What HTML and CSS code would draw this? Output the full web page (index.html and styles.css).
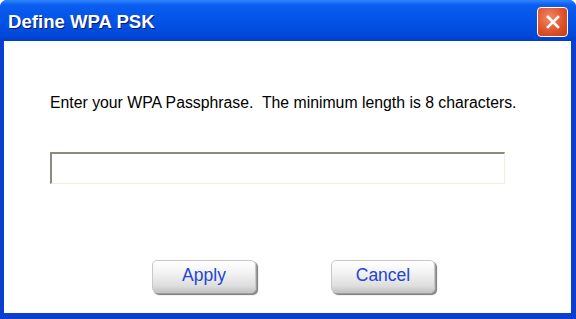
FILE: index.html
```html
<!DOCTYPE html>
<html lang="en">
<head>
  <meta charset="UTF-8">
  <title>Define WPA PSK</title>
  <link rel="stylesheet" href="styles.css">
</head>
<body>
  <div class="window">
    <div class="titlebar">
      <span class="title">Define WPA PSK</span>
      <button class="close" aria-label="Close">
        <svg width="16" height="16" viewBox="0 0 16 16">
          <path d="M3 3 L13 13 M13 3 L3 13" stroke="#fff" stroke-width="2.6" stroke-linecap="square"/>
        </svg>
      </button>
    </div>
    <div class="content">
      <p class="prompt">Enter your WPA Passphrase.&nbsp; The minimum length is 8 characters.</p>
      <input type="text" class="passphrase">
      <div class="actions">
        <button class="btn">Apply</button>
        <button class="btn">Cancel</button>
      </div>
    </div>
  </div>
</body>
</html>
```

FILE: styles.css
```css
html, body {
  margin: 0;
  padding: 0;
}

body {
  width: 576px;
  height: 319px;
  overflow: hidden;
  font-family: "Liberation Sans", Arial, sans-serif;
}

.window {
  width: 576px;
  height: 319px;
  box-sizing: border-box;
  display: flex;
  flex-direction: column;
  background: #0a3fd0;
  border-radius: 7px 7px 0 0;
  overflow: hidden;
}

.titlebar {
  height: 41px;
  box-sizing: border-box;
  flex: none;
  display: flex;
  align-items: center;
  justify-content: space-between;
  padding: 3px 8px 0 8px;
  background: linear-gradient(#2f86fb 0%, #0a5ef0 12%, #0354e8 45%, #0149d9 85%, #003fc8 100%);
}

.title {
  color: #fff;
  font-size: 18.6px;
  font-weight: bold;
  text-shadow: 1px 1px 0 #0a1a6a;
}

.close {
  width: 31px;
  height: 30px;
  padding: 0;
  border: 1px solid #fff;
  border-radius: 4px;
  background: radial-gradient(circle at 40% 35%, #f08a6a 0%, #e0532c 55%, #c23a14 100%);
  display: flex;
  align-items: center;
  justify-content: center;
}

.content {
  flex: 1;
  margin: 0 5px 6px 4px;
  background: #fff;
  padding: 53px 0 0 46px;
  display: flex;
  flex-direction: column;
}

.prompt {
  margin: 0;
  font-size: 15.8px;
  line-height: 18px;
  color: #000;
}

.passphrase {
  margin-top: 40px;
  width: 455px;
  height: 32px;
  box-sizing: border-box;
  border-style: solid;
  border-width: 2px 1px 1px 2px;
  border-color: #8c8b7e #f1efe2 #f1efe2 #8c8b7e;
  background: #fff;
  padding: 0;
}

.actions {
  display: flex;
  gap: 75px;
  margin: 76px 0 0 102px;
}

.btn {
  width: 104px;
  height: 33px;
  box-sizing: border-box;
  border: 1px solid #c8c8c8;
  border-radius: 5px;
  background: linear-gradient(#ffffff 0%, #f4f4f4 35%, #dedede 80%, #c4c4c4 100%);
  box-shadow: 1px 1px 0 #9a9a9a, 2px 2px 1px #7a7a7a;
  color: #2346d2;
  font-family: "Liberation Sans", Arial, sans-serif;
  font-size: 17.5px;
  padding: 0 0 2px 0;
}
```
